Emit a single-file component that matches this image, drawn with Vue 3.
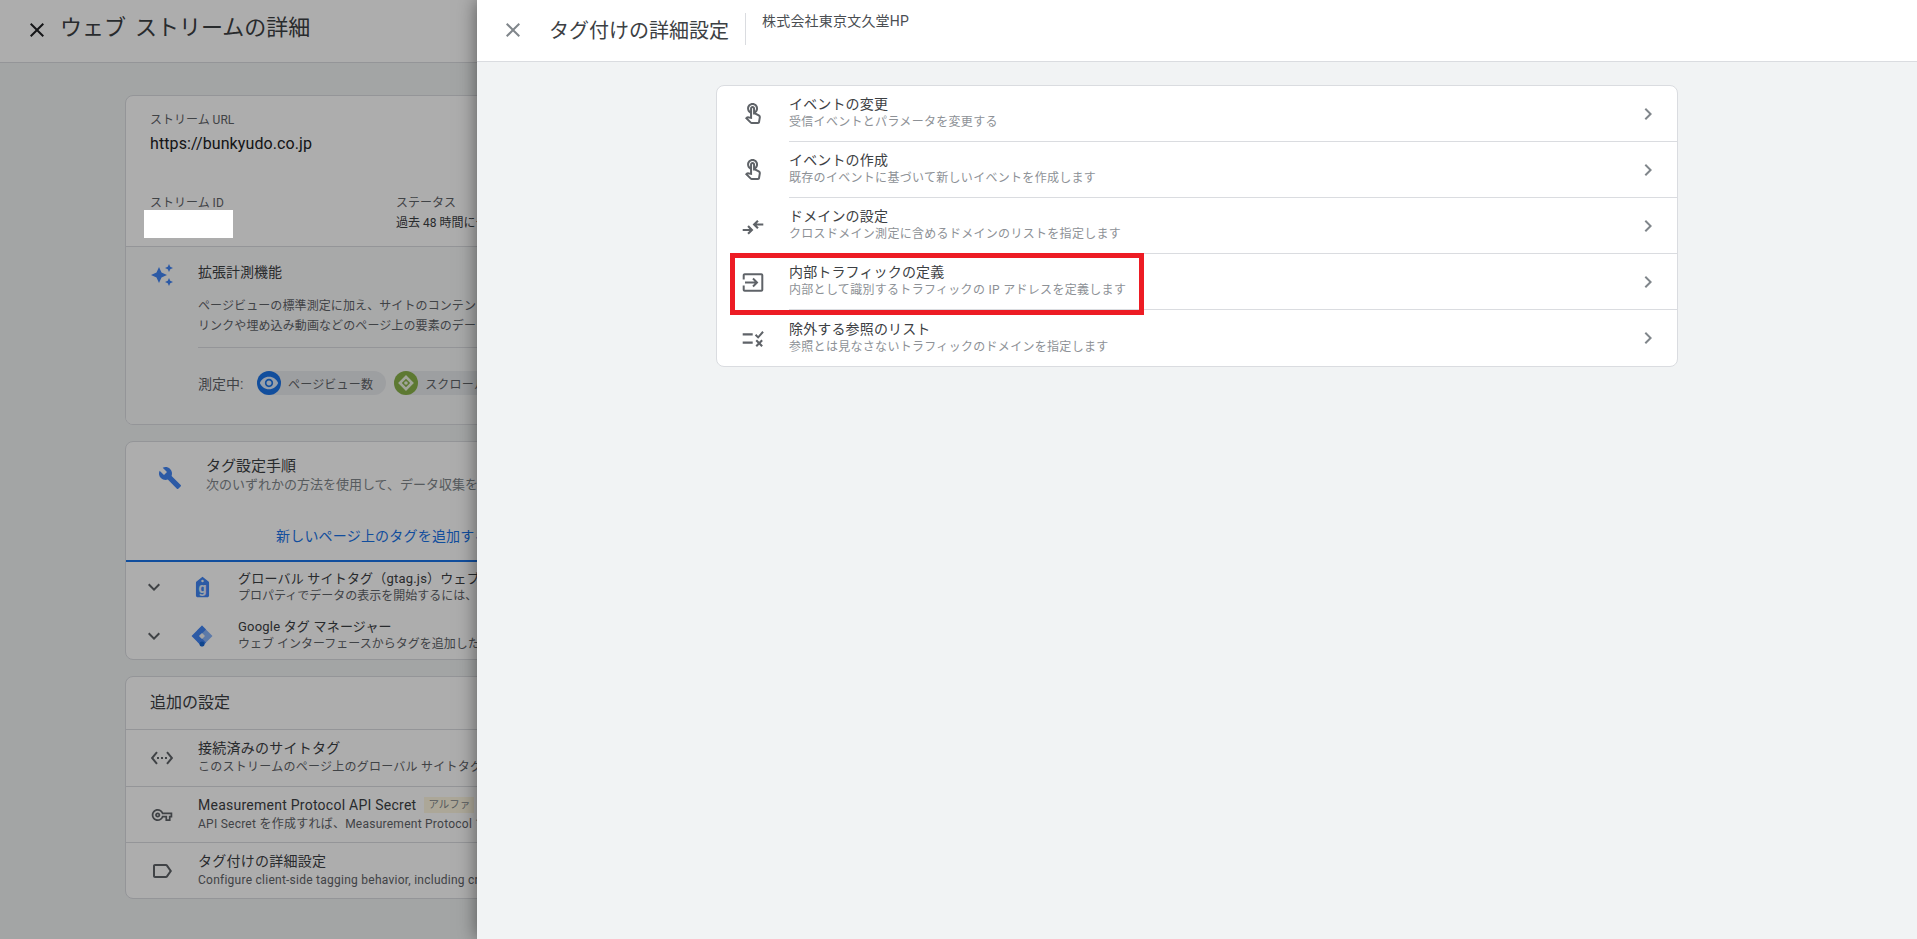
<script setup>
const ICON = {
  close: 'M19 6.41L17.59 5 12 10.59 6.41 5 5 6.41 10.59 12 5 17.59 6.41 19 12 13.41 17.59 19 19 17.59 13.41 12z',
  touch: 'M18.19 12.44l-3.24-1.62c1.29-1 2.12-2.56 2.12-4.32 0-3.03-2.47-5.5-5.5-5.5s-5.5 2.47-5.5 5.5c0 2.13 1.22 3.98 3 4.89v3.26c-2.15-.46-2.02-.44-2.26-.44-.53 0-1.03.21-1.41.59L4 16.22l5.09 5.09C9.52 21.75 10.12 22 10.74 22h6.3c.98 0 1.81-.7 1.97-1.67l.8-4.71c.22-1.3-.43-2.58-1.62-3.18zm-.35 2.85l-.8 4.71h-6.3c-.09 0-.17-.04-.24-.1l-3.68-3.68 4.25.89V6.5c0-.28.22-.5.5-.5s.5.22.5.5v6h1.76l3.46 1.73c.4.2.62.63.55 1.06zM8.07 6.5c0-1.93 1.57-3.5 3.5-3.5s3.5 1.57 3.5 3.5c0 .95-.38 1.81-1 2.44V6.5c0-1.38-1.12-2.5-2.5-2.5s-2.5 1.12-2.5 2.5v2.44c-.62-.63-1-1.49-1-2.44z',
  domain: 'M22.3 9.5H15.6l2.1-2.100L16.200 5.900l-4.600 4.600 4.600 4.600 1.500-1.500-2.100-2.100h6.700zM1.700 14.900h6.700l-2.100-2.100 1.500-1.500 4.600 4.600-4.600 4.600-1.500-1.500 2.100-2.100H1.700z',
  input: 'M20.3 3.3H3.7c-1.1 0-2 .9-2 2v4.2h2V5.3h16.6v14.4H3.7v-4.2h-2v4.2c0 1.1.9 2 2 2h16.6c1.1 0 2-.9 2-2V5.300c0-1.100-.9-2-2-2zM4 11.500h9.600l-2.300-2.300 1.400-1.400 4.700 4.700-4.700 4.700-1.400-1.400 2.300-2.300H4z',
  rule: 'M1.700 7.200h10v2.200h-10zM1.700 15.600h10v2.200h-10zM13.800 9.600l1.500-1.500 1.800 1.800 4.200-4.800 1.500 1.400-5.600 6.300zM14.500 15l1.500-1.500 2.200 2.200 2.200-2.200 1.500 1.500-2.200 2.200 2.200 2.200-1.500 1.500-2.200-2.200-2.200 2.200-1.500-1.500 2.200-2.200z',
  chevron: 'M10 6L8.59 7.41 13.17 12l-4.58 4.59L10 18l6-6z',
  sparkle: 'M19 9l1.25-2.75L23 5l-2.75-1.25L19 1l-1.25 2.75L15 5l2.75 1.25L19 9zm-7.5.5L9 4 6.5 9.5 1 12l5.5 2.5L9 20l2.5-5.5L17 12l-5.5-2.5zM19 15l-1.25 2.75L15 19l2.75 1.25L19 23l1.25-2.75L23 19l-2.75-1.25L19 15z',
  wrench: 'M22.7 19l-9.1-9.1c.9-2.3.4-5-1.5-6.9-2-2-5-2.4-7.4-1.3L9 6 6 9 1.6 4.7C.4 7.1.9 10.1 2.9 12.1c1.9 1.9 4.6 2.4 6.9 1.5l9.1 9.1c.4.4 1 .4 1.4 0l2.3-2.3c.5-.4.5-1.1.1-1.4z',
  expand: 'M16.59 8.59L12 13.17 7.41 8.59 6 10l6 6 6-6z',
  ethernet: 'M7.77 6.76L6.23 5.48.82 12l5.41 6.52 1.54-1.28L3.42 12l4.35-5.24zM7 13h2v-2H7v2zm10-2h-2v2h2v-2zm-6 2h2v-2h-2v2zm6.77-7.52l-1.54 1.28L20.58 12l-4.35 5.24 1.54 1.28L23.18 12l-5.41-6.52z',
  key: 'M22 19h-6v-4h-2.68c-1.14 2.42-3.6 4-6.32 4-3.86 0-7-3.14-7-7s3.14-7 7-7c2.72 0 5.17 1.58 6.32 4H24v6h-2v4zm-4-2h2v-4h2v-2H11.94l-.23-.67C11.01 8.34 9.11 7 7 7c-2.76 0-5 2.24-5 5s2.24 5 5 5c2.11 0 4.01-1.34 4.71-3.33l.23-.67H18v4zM7 15c-1.65 0-3-1.35-3-3s1.35-3 3-3 3 1.35 3 3-1.35 3-3 3zm0-4c-.55 0-1 .45-1 1s.45 1 1 1 1-.45 1-1-.45-1-1-1z',
  label: 'M17.63 5.84C17.27 5.33 16.67 5 16 5L5 5.01C3.9 5.01 3 5.9 3 7v10c0 1.1.9 1.99 2 1.99L16 19c.67 0 1.27-.33 1.63-.84L22 12l-4.37-6.16zM16 17H5V7h11l3.55 5L16 17z',
  eye: 'M12 4.5C7 4.5 2.73 7.61 1 12c1.73 4.39 6 7.5 11 7.5s9.27-3.11 11-7.5c-1.73-4.39-6-7.5-11-7.5zM12 17c-2.76 0-5-2.24-5-5s2.24-5 5-5 5 2.24 5 5-2.24 5-5 5zm0-8c-1.66 0-3 1.34-3 3s1.34 3 3 3 3-1.34 3-3-1.34-3-3-3z'
}

const settings = [
  { icon: ICON.touch, title: 'イベントの変更', sub: '受信イベントとパラメータを変更する' },
  { icon: ICON.touch, title: 'イベントの作成', sub: '既存のイベントに基づいて新しいイベントを作成します' },
  { icon: ICON.domain, title: 'ドメインの設定', sub: 'クロスドメイン測定に含めるドメインのリストを指定します' },
  { icon: ICON.input, title: '内部トラフィックの定義', sub: '内部として識別するトラフィックの IP アドレスを定義します' },
  { icon: ICON.rule, title: '除外する参照のリスト', sub: '参照とは見なさないトラフィックのドメインを指定します' }
]

const extras = [
  { icon: ICON.ethernet, box: '0 0 24 24', title: '接続済みのサイトタグ', sub: 'このストリームのページ上のグローバル サイトタグを使用して追加のプロパティやサービスのタグを読み込みます' },
  { icon: ICON.key, box: '-2 -2 28 28', title: 'Measurement Protocol API Secret', badge: 'アルファ', sub: 'API Secret を作成すれば、Measurement Protocol でこのストリームにイベントを送信できます' },
  { icon: ICON.label, box: '0 0 24 24', title: 'タグ付けの詳細設定', sub: 'Configure client-side tagging behavior, including cross-domain linking and internal traffic' }
]
</script>

<template>
  <div class="root">
    <div class="page">
      <header class="page-head">
        <svg class="page-close" viewBox="0 0 24 24"><path :d="ICON.close" /></svg>
        <h1 class="page-title">ウェブ ストリームの詳細</h1>
      </header>
      <main class="page-body">
        <section class="card">
          <div class="stream">
            <div class="muted-label">ストリーム URL</div>
            <div class="stream-url">https://bunkyudo.co.jp</div>
            <div class="stream-cols">
              <div class="col-id">
                <div class="muted-label">ストリーム ID</div>
                <div class="redact"></div>
              </div>
              <div>
                <div class="muted-label">ステータス</div>
                <div class="status">過去 48 時間にデータを受信しています</div>
              </div>
            </div>
          </div>
          <div class="enhanced">
            <svg class="sparkle" viewBox="0 0 24 24"><path :d="ICON.sparkle" /></svg>
            <div class="enhanced-main">
              <div class="enh-title">拡張計測機能</div>
              <p class="enh-desc">ページビューの標準測定に加え、サイトのコンテンツに関するデータを自動的に収集します。<br />リンクや埋め込み動画などのページ上の要素のデータも収集されます。</p>
              <div class="measuring">
                <span class="measuring-label">測定中:</span>
                <span class="chip">
                  <span class="chip-dot dot-blue"><svg viewBox="0 0 24 24"><path :d="ICON.eye" /></svg></span>
                  <span>ページビュー数</span>
                </span>
                <span class="chip">
                  <span class="chip-dot dot-green">
                    <svg viewBox="0 0 24 24"><path fill-rule="evenodd" d="M12 2.500l9.500 9.500-9.500 9.500L2.500 12zM12 7l-5 5 5 5 5-5z" /><circle cx="12" cy="12" r="2.200" /></svg>
                  </span>
                  <span>スクロール数</span>
                </span>
              </div>
            </div>
          </div>
        </section>

        <section class="card">
          <div class="tag-head">
            <svg class="wrench" viewBox="0 0 24 24"><path :d="ICON.wrench" /></svg>
            <div>
              <div class="tag-title">タグ設定手順</div>
              <div class="tag-sub">次のいずれかの方法を使用して、データ収集を開始します</div>
            </div>
          </div>
          <div class="tag-link">新しいページ上のタグを追加する</div>
          <div class="tag-row">
            <svg class="expand" viewBox="0 0 24 24"><path :d="ICON.expand" /></svg>
            <span class="gtag">
              <svg viewBox="0 0 16 22"><path d="M8 0l6.400 5.200c.4.3.6.8.6 1.300V20c0 1.100-.9 2-2 2H3c-1.100 0-2-.9-2-2V6.500c0-.5.2-1 .6-1.300z" /><circle cx="8" cy="4.500" r="1.300" fill="#f4f4f4" /></svg>
              <span class="gtag-g">g</span>
            </span>
            <div class="row-text">
              <div class="row-title">グローバル サイトタグ（gtag.js）ウェブサイト ビルダーまたは CMS を使用している場合</div>
              <div class="row-sub">プロパティでデータの表示を開始するには、このタグをページに追加します</div>
            </div>
          </div>
          <div class="tag-row tag-row-2">
            <svg class="expand" viewBox="0 0 24 24"><path :d="ICON.expand" /></svg>
            <svg class="gtm" viewBox="0 0 24 24">
              <path fill="#8ab4f8" d="M12 1.500l10.500 10.500L12 22.500 7 17.500 12.500 12 7 6.500z" />
              <path fill="#4285f4" d="M12 1.500L1.500 12 12 22.500l4-4L9.500 12 16 5.500z" />
              <circle cx="12" cy="20" r="2.500" fill="#1967d2" />
              <rect x="9.800" y="9.800" width="4.400" height="4.400" rx=".8" transform="rotate(45 12 12)" fill="#f4f4f4" />
            </svg>
            <div class="row-text">
              <div class="row-title">Google タグ マネージャー</div>
              <div class="row-sub">ウェブ インターフェースからタグを追加したり管理したりできます</div>
            </div>
          </div>
        </section>

        <section class="card">
          <div class="extra-title">追加の設定</div>
          <div v-for="item in extras" :key="item.title" class="extra-row">
            <svg class="extra-icon" :viewBox="item.box"><path :d="item.icon" /></svg>
            <div>
              <div class="extra-name">
                <span>{{ item.title }}</span>
                <span v-if="item.badge" class="badge">{{ item.badge }}</span>
              </div>
              <div class="extra-sub">{{ item.sub }}</div>
            </div>
          </div>
        </section>
      </main>
    </div>

    <div class="scrim"></div>

    <aside class="drawer">
      <header class="drawer-head">
        <svg class="drawer-close" viewBox="0 0 24 24"><path :d="ICON.close" /></svg>
        <h2 class="drawer-title">タグ付けの詳細設定</h2>
        <div class="drawer-name">株式会社東京文久堂HP</div>
      </header>
      <div class="drawer-body">
        <div class="settings">
          <div v-for="item in settings" :key="item.title" class="setting">
            <svg class="setting-icon" viewBox="0 0 24 24"><path :d="item.icon" /></svg>
            <div class="setting-main">
              <div class="setting-text">
                <div class="setting-title">{{ item.title }}</div>
                <div class="setting-sub">{{ item.sub }}</div>
              </div>
              <svg class="chevron" viewBox="0 0 24 24"><path :d="ICON.chevron" /></svg>
            </div>
          </div>
        </div>
      </div>
    </aside>

    <div class="highlight"></div>
  </div>
</template>

<style>
html, body { margin: 0; overflow: hidden; }
</style>

<style scoped>
.root {
  position: relative;
  width: 1917px;
  height: 939px;
  overflow: hidden;
  background: #f1f3f4;
  font-family: Roboto, "Noto Sans CJK JP", sans-serif;
  color: #202124;
}
.page { width: 100%; }
.page-head {
  display: flex;
  align-items: flex-start;
  height: 62px;
  background: #fff;
  border-bottom: 1px solid #dadce0;
  box-sizing: content-box;
}
.page-close { width: 24px; height: 24px; margin: 18px 0 0 25px; fill: #202124; flex: none; }
.page-title { margin: 14px 0 0 11px; font-size: 22px; font-weight: 400; line-height: 28px; word-spacing: 3.5px; color: #3c4043; }
.page-body { display: flex; flex-direction: column; gap: 16px; padding: 32px 125px 0; }
.card {
  background: #fff;
  border: 1px solid #dadce0;
  border-radius: 8px;
  overflow: hidden;
}
.stream { height: 151px; padding: 15px 24px 0; box-sizing: border-box; border-bottom: 1px solid #dadce0; }
.muted-label { font-size: 12px; line-height: 18px; color: #5f6368; }
.stream-url { margin-top: 5px; font-size: 16px; line-height: 20px; color: #202124; letter-spacing: .1px; }
.stream-cols { display: flex; margin-top: 40px; }
.col-id { position: relative; width: 246px; }
.redact { position: absolute; left: -6px; top: 16px; width: 89px; height: 28px; background: #fff; z-index: 2; }
.status { margin-top: 2px; font-size: 12px; line-height: 18px; color: #3c4043; }
.enhanced { display: flex; height: 177px; box-sizing: border-box; padding: 16px 24px 0; background: #f8f9fa; }
.sparkle { width: 24px; height: 24px; fill: #4285f4; flex: none; }
.enhanced-main { flex: 1; margin-left: 24px; }
.enh-title { font-size: 14px; line-height: 18px; color: #3c4043; }
.enh-desc { margin: 15px 0 0; padding-bottom: 11px; font-size: 12px; line-height: 20px; letter-spacing: .1px; color: #5f6368; border-bottom: 1px solid #dadce0; white-space: nowrap; }
.measuring { display: flex; align-items: center; gap: 8px; margin-top: 23px; font-size: 14px; color: #5f6368; white-space: nowrap; }
.measuring-label { width: 51px; flex: none; }
.chip {
  display: inline-flex;
  align-items: center;
  gap: 7px;
  height: 24px;
  padding-right: 13px;
  border-radius: 12px;
  background: #e8eaed;
  font-size: 12px;
  letter-spacing: .2px;
  color: #5f6368;
}
.chip-dot { display: flex; align-items: center; justify-content: center; width: 24px; height: 24px; border-radius: 50%; }
.chip-dot svg { width: 20px; height: 20px; fill: #fff; opacity: .85; }
.dot-blue { background: #1a73e8; }
.dot-green { background: #8ab34a; }
.tag-head { display: flex; height: 70px; padding: 14px 0 0 32px; box-sizing: content-box; }
.wrench { width: 24px; height: 24px; margin-top: 10px; fill: #4285f4; flex: none; }
.tag-head > div { margin-left: 24px; }
.tag-title { font-size: 15px; line-height: 20px; color: #3c4043; }
.tag-sub { margin-top: 1px; font-size: 13px; line-height: 16px; color: #80868b; white-space: nowrap; }
.tag-link {
  height: 34px;
  padding-left: 150px;
  font-size: 14px;
  line-height: 20px;
  letter-spacing: .2px;
  color: #1a73e8;
  border-bottom: 2px solid #1a73e8;
  white-space: nowrap;
}
.tag-row { display: flex; align-items: center; height: 50px; white-space: nowrap; }
.tag-row-2 { height: 47px; }
.expand { width: 24px; height: 24px; margin-left: 16px; fill: #5f6368; flex: none; }
.gtag { position: relative; display: block; width: 15px; height: 22px; margin-left: 29px; flex: none; }
.gtag svg { display: block; width: 15px; height: 22px; fill: #4285f4; }
.gtag-g { position: absolute; left: 0; right: 0; top: 4px; font-size: 14px; line-height: 16px; font-weight: 700; text-align: center; color: #e4ecfb; }
.gtm { width: 24px; height: 24px; margin-left: 24px; flex: none; }
.row-text { margin-left: 28px; }
.tag-row-2 .row-text { margin-left: 24px; }
.row-title { font-size: 13px; line-height: 18px; letter-spacing: .2px; color: #3c4043; }
.row-sub { font-size: 12px; line-height: 17px; color: #5f6368; }
.extra-title { height: 52px; padding-left: 24px; font-size: 16px; line-height: 52px; color: #3c4043; border-bottom: 1px solid #dadce0; }
.extra-row { display: flex; align-items: center; height: 56px; padding-left: 24px; box-sizing: border-box; white-space: nowrap; }
.extra-row + .extra-row { border-top: 1px solid #dadce0; }
.extra-icon { width: 24px; height: 24px; fill: #5f6368; flex: none; }
.extra-row > div { margin-left: 24px; }
.extra-name { display: flex; align-items: center; gap: 8px; font-size: 14px; line-height: 18px; letter-spacing: .25px; color: #3c4043; }
.badge { padding: 0 4px; font-size: 10.500px; line-height: 16px; letter-spacing: 0; background: #fef7e0; color: #80868b; }
.extra-sub { font-size: 12px; line-height: 20px; letter-spacing: .25px; color: #5f6368; }

.scrim { position: absolute; inset: 0; background: rgba(0, 0, 0, .32); }

.drawer {
  position: absolute;
  top: 0;
  right: 0;
  bottom: 0;
  left: 477px;
  display: flex;
  flex-direction: column;
  background: #f1f3f4;
  box-shadow: 0 0 18px rgba(0, 0, 0, .5);
}
.drawer-head {
  display: flex;
  align-items: flex-start;
  height: 62px;
  flex: none;
  background: #fff;
  border-bottom: 1px solid #dadce0;
  box-sizing: border-box;
}
.drawer-close { width: 24px; height: 24px; margin: 18px 0 0 24px; fill: #80868b; flex: none; }
.drawer-title { margin: 13px 0 0 24px; padding-right: 16px; height: 32px; border-right: 1px solid #dadce0; font-size: 20px; font-weight: 400; line-height: 37px; color: #3c4043; }
.drawer-name { margin: 11px 0 0 16px; font-size: 14px; line-height: 20px; letter-spacing: .2px; color: #4a4e52; }
.drawer-body { flex: 1; padding: 23px 239px 0; }
.settings { background: #fff; border: 1px solid #dadce0; border-radius: 8px; overflow: hidden; }
.setting { display: flex; height: 56px; }
.setting:first-child { height: 55px; }
.setting:last-child { height: 57px; }
.setting-icon { width: 24px; height: 24px; margin: 17px 0 0 24px; fill: #5f6368; flex: none; }
.setting:first-child .setting-icon { margin-top: 16px; }
.setting-main { display: flex; align-items: center; flex: 1; margin-left: 24px; box-sizing: border-box; }
.setting + .setting .setting-main { border-top: 1px solid #dadce0; }
.setting-text { flex: 1; padding-bottom: 2px; }
.setting-title { font-size: 14px; line-height: 18px; letter-spacing: .15px; color: #3c4043; }
.setting-sub { margin-top: 1px; font-size: 12px; line-height: 16px; letter-spacing: .3px; color: #8d9196; }
.chevron { width: 24px; height: 24px; margin-right: 17px; fill: #80868b; }

.highlight { position: absolute; left: 730px; top: 253px; width: 414px; height: 62px; box-sizing: border-box; border: 5px solid #ed1c24; }
</style>
